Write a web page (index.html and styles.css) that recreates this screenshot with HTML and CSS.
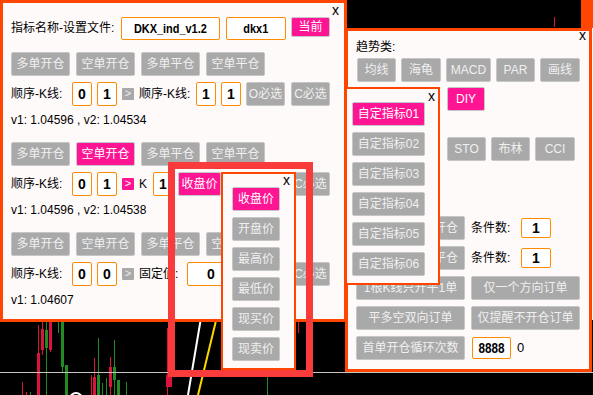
FILE: index.html
```html
<!DOCTYPE html>
<html lang="zh">
    <head>
        <meta charset="UTF-8">
        <meta name="viewport" content="width=device-width, initial-scale=1.0">
        <title>指标设置</title>
        <link rel="stylesheet" href="styles.css">
    </head>
    <body>
        <div class="desk">
            <svg class="chart" width="593" height="395" viewBox="0 0 593 395">
                <g fill="#dc143c">
                    <rect x="22" y="382" width="1" height="13"/>
                    <rect x="26" y="392" width="1" height="3"/>
                    <rect x="38" y="325" width="1" height="30"/>
                    <rect x="37" y="353" width="3" height="42"/>
                    <rect x="42" y="322" width="1" height="33"/>
                    <rect x="41" y="329" width="3" height="21"/>
                    <rect x="49" y="322" width="3" height="28"/>
                    <rect x="50" y="322" width="1" height="30"/>
                    <rect x="91" y="375" width="1" height="20"/>
                    <rect x="94" y="358" width="1" height="20"/>
                    <rect x="93" y="377" width="3" height="18"/>
                    <rect x="110" y="357" width="1" height="38"/>
                    <rect x="109" y="367" width="3" height="20"/>
                    <rect x="167" y="328" width="1" height="67"/>
                    <rect x="166" y="375" width="2" height="12"/>
                    <rect x="168" y="373" width="4" height="14"/>
                    <rect x="298" y="322" width="1" height="11"/>
                    <rect x="554" y="17" width="1" height="10"/>
                </g>
                <g fill="#228b22">
                    <rect x="30" y="392" width="1" height="3"/>
                    <rect x="46" y="322" width="1" height="73"/>
                    <rect x="45" y="330" width="3" height="18"/>
                    <rect x="58" y="322" width="1" height="11"/>
                    <rect x="61" y="322" width="3" height="45"/>
                    <rect x="62" y="322" width="1" height="51"/>
                    <rect x="65" y="365" width="3" height="30"/>
                    <rect x="98" y="338" width="1" height="57"/>
                    <rect x="97" y="375" width="3" height="20"/>
                    <rect x="102" y="383" width="1" height="12"/>
                    <rect x="106" y="378" width="1" height="17"/>
                    <rect x="114" y="340" width="1" height="55"/>
                    <rect x="113" y="367" width="3" height="13"/>
                    <rect x="117" y="380" width="3" height="15"/>
                    <rect x="126" y="382" width="1" height="13"/>
                    <rect x="267" y="377" width="1" height="18"/>
                </g>
                <circle cx="76" cy="399" r="6" fill="none" stroke="#fff" stroke-width="2"/>
                <line x1="204" y1="300" x2="188" y2="395" stroke="#fff" stroke-width="2"/>
                <line x1="221" y1="300" x2="198" y2="395" stroke="#ffd700" stroke-width="2"/>
                <line x1="0" y1="372.5" x2="593" y2="372.5" stroke="#c4c4c4" stroke-width="1"/>
                <rect x="581" y="0" width="3" height="4" fill="#fff"/>
            </svg>

            <div class="edge"></div>

            <div class="panel main">
                <span class="close">x</span>
                <div class="row head">
                    <span class="label file-label">指标名称-设置文件:</span>
                    <span class="box file"><span class="narrow">DKX_ind_v1.2</span></span>
                    <span class="box file name"><span class="narrow">dkx1</span></span>
                    <span class="btn on now">当前</span>
                </div>

                <div class="group">
                    <div class="row acts">
                        <span class="btn act">多单开仓</span>
                        <span class="btn act">空单开仓</span>
                        <span class="btn act">多单平仓</span>
                        <span class="btn act">空单平仓</span>
                    </div>
                    <div class="row">
                        <span class="label k">顺序-K线:</span>
                        <span class="box num">0</span>
                        <span class="box num">1</span>
                        <span class="btn arrow">&gt;</span>
                        <span class="label k">顺序-K线:</span>
                        <span class="box num">1</span>
                        <span class="box num">1</span>
                        <span class="btn sel push">O必选</span>
                        <span class="btn sel">C必选</span>
                    </div>
                    <div class="vals">v1: 1.04596 , v2: 1.04534</div>
                </div>

                <div class="group">
                    <div class="row acts">
                        <span class="btn act">多单开仓</span>
                        <span class="btn act on">空单开仓</span>
                        <span class="btn act">多单平仓</span>
                        <span class="btn act">空单平仓</span>
                    </div>
                    <div class="row">
                        <span class="label k">顺序-K线:</span>
                        <span class="box num">0</span>
                        <span class="box num">1</span>
                        <span class="btn arrow on">&gt;</span>
                        <span class="label short">K</span>
                        <span class="box num">1</span>
                        <span class="btn on price-pick">收盘价</span>
                        <span class="btn sel push">C必选</span>
                    </div>
                    <div class="vals">v1: 1.04596 , v2: 1.04538</div>
                </div>

                <div class="group">
                    <div class="row acts">
                        <span class="btn act">多单开仓</span>
                        <span class="btn act">空单开仓</span>
                        <span class="btn act">多单平仓</span>
                        <span class="btn act">空单平仓</span>
                    </div>
                    <div class="row">
                        <span class="label k">顺序-K线:</span>
                        <span class="box num">0</span>
                        <span class="box num">0</span>
                        <span class="btn arrow">&gt;</span>
                        <span class="label fixed">固定值:</span>
                        <span class="box fixed-val">0</span>
                        <span class="btn sel push">C必选</span>
                    </div>
                    <div class="vals">v1: 1.04607</div>
                </div>
            </div>

            <div class="panel trend">
                <span class="close">x</span>
                <div class="cat">趋势类:</div>
                <div class="row tools first">
                    <span class="btn tool">均线</span>
                    <span class="btn tool w40">海龟</span>
                    <span class="btn tool w45">MACD</span>
                    <span class="btn tool">PAR</span>
                    <span class="btn tool w40">画线</span>
                </div>
                <div class="row tools">
                    <span class="btn tool on w38 skip">DIY</span>
                </div>
                <div class="row tools third">
                    <span class="btn tool skip">STO</span>
                    <span class="btn tool">布林</span>
                    <span class="btn tool w40">CCI</span>
                </div>

                <div class="opts">
                    <div class="row">
                        <span class="btn long tail">开仓</span>
                        <span class="label cnt">条件数:</span>
                        <span class="box count">1</span>
                    </div>
                    <div class="row">
                        <span class="btn long tail">平仓</span>
                        <span class="label cnt">条件数:</span>
                        <span class="box count">1</span>
                    </div>
                    <div class="row pair">
                        <span class="btn long">1根K线只开平1单</span>
                        <span class="btn long">仅一个方向订单</span>
                    </div>
                    <div class="row pair">
                        <span class="btn long">平多空双向订单</span>
                        <span class="btn long">仅提醒不开仓订单</span>
                    </div>
                    <div class="row">
                        <span class="btn long">首单开仓循环次数</span>
                        <span class="box loops"><span class="narrow">8888</span></span>
                        <span class="label done">0</span>
                    </div>
                </div>
            </div>

            <div class="frame"></div>

            <div class="panel price">
                <span class="close">x</span>
                <div class="list">
                    <span class="btn pick on">收盘价</span>
                    <span class="btn pick">开盘价</span>
                    <span class="btn pick">最高价</span>
                    <span class="btn pick">最低价</span>
                    <span class="btn pick">现买价</span>
                    <span class="btn pick">现卖价</span>
                </div>
            </div>

            <div class="panel diy">
                <span class="close">x</span>
                <div class="list">
                    <span class="btn item on">自定指标01</span>
                    <span class="btn item">自定指标02</span>
                    <span class="btn item">自定指标03</span>
                    <span class="btn item">自定指标04</span>
                    <span class="btn item">自定指标05</span>
                    <span class="btn item">自定指标06</span>
                </div>
            </div>
        </div>
    </body>
</html>
```

FILE: styles.css
```css
html, body {
    margin: 0;
    padding: 0;
}

body {
    background: #000;
    color: #000;
    font-family: "Liberation Sans", "Noto Sans CJK SC", sans-serif;
    font-size: 12px;
}

.desk {
    position: relative;
    width: 593px;
    height: 395px;
    overflow: hidden;
}

.chart {
    position: absolute;
    left: 0;
    top: 0;
}

/* windows on the chart */
.panel {
    position: absolute;
    box-sizing: border-box;
    border: 3px solid #ff4500;
    background: #fffafa;
}

.edge {
    position: absolute;
    left: 581px;
    top: 0;
    width: 12px;
    height: 320px;
    box-sizing: border-box;
    border-top: 28px solid #ff4500;
    background: #fffafa;
}

.close {
    position: absolute;
    font-size: 14px;
    line-height: 14px;
    color: #000;
}

.row {
    display: flex;
    align-items: center;
    gap: 5px;
    height: 24px;
}

.label {
    white-space: nowrap;
    line-height: 16px;
}

.btn {
    box-sizing: border-box;
    height: 24px;
    line-height: 22px;
    border: 1px solid #c6c6c6;
    border-radius: 2px;
    background: #a9a9a9;
    color: #f0f0f0;
    text-align: center;
    white-space: nowrap;
}

.btn.on {
    background: #ff1493;
    color: #fff;
}

.box {
    box-sizing: border-box;
    height: 24px;
    line-height: 22px;
    border: 1px solid #ff8c00;
    border-radius: 2px;
    background: #fff;
    text-align: center;
    font-weight: bold;
    font-size: 14px;
}

.narrow {
    display: inline-block;
    transform: scaleX(0.84);
}

/* main settings window */
.main {
    left: 0;
    top: 0;
    width: 347px;
    height: 322px;
    padding: 14px 14px 0 8px;
}

.main .close {
    top: 0;
    right: 5px;
}

.head {
    gap: 6px;
    height: 23px;
    align-items: flex-start;
    margin-bottom: 12px;
}

.file-label {
    width: 104px;
    line-height: 23px;
}

.box.file {
    width: 99px;
    height: 23px;
    line-height: 21px;
    font-size: 13px;
}

.box.name {
    width: 60px;
}

.now {
    width: 39px;
    height: 20px;
    line-height: 18px;
    margin-left: -1px;
}

.group {
    display: flex;
    flex-direction: column;
    gap: 6px;
    margin-bottom: 14px;
}

.acts {
    gap: 6px;
}

.act {
    width: 59px;
}

.k {
    width: 52px;
}

.k:first-child {
    margin-right: 4px;
}

.short {
    width: 9px;
}

.fixed {
    width: 43px;
}

.num {
    width: 20px;
}

.fixed-val {
    width: 48px;
}

.arrow {
    width: 12px;
    height: 12px;
    line-height: 11px;
    font-size: 11px;
    border: none;
    border-radius: 1px;
}

.price-pick {
    width: 43px;
}

.sel {
    width: 39px;
}

.sel + .sel {
    margin-left: 1px;
}

.push {
    margin-left: auto;
}

.vals {
    height: 16px;
    line-height: 16px;
}

/* indicator window */
.trend {
    left: 345px;
    top: 28px;
    width: 247px;
    height: 344px;
    padding: 0 0 0 8px;
}

.trend .close {
    top: -3px;
    right: 3px;
}

.cat {
    height: 16px;
    line-height: 16px;
    margin-top: 8px;
}

.tools {
    margin-top: 5px;
    margin-left: 1px;
}

.tools.first {
    margin-top: 3px;
}

.tools.third {
    margin-top: 26px;
}

.tool {
    width: 39px;
}

.skip {
    margin-left: 90px;
}

.w38 {
    width: 38px;
}

.w40 {
    width: 40px;
}

.w45 {
    width: 45px;
}

.opts {
    display: flex;
    flex-direction: column;
    gap: 6px;
    margin-top: 55px;
}

.pair {
    gap: 6px;
}

.long {
    width: 109px;
}

.tail {
    text-align: right;
    padding-right: 6px;
}

.cnt {
    width: 45px;
    margin-left: 1px;
}

.box.count {
    width: 30px;
    height: 20px;
    line-height: 18px;
}

.box.loops {
    width: 39px;
    height: 22px;
    line-height: 20px;
    margin-left: 2px;
    font-size: 14px;
}

.done {
    margin-left: 1px;
    font-size: 13px;
}

/* highlight frame */
.frame {
    position: absolute;
    left: 168px;
    top: 162px;
    width: 145px;
    height: 215px;
    box-sizing: border-box;
    border: 7px solid #f93b3b;
}

/* pop-up lists */
.list {
    display: flex;
    flex-direction: column;
    gap: 6px;
}

.price {
    left: 221px;
    top: 172px;
    width: 75px;
    height: 198px;
    border-width: 2px;
    padding: 13px 0 0 9px;
}

.price .close {
    top: -1px;
    right: 4px;
}

.pick {
    width: 48px;
}

.diy {
    left: 345px;
    top: 87px;
    width: 95px;
    height: 198px;
    border-width: 2px;
    padding: 13px 0 0 5px;
}

.diy .close {
    top: 0;
    right: 3px;
}

.item {
    width: 73px;
}
```
